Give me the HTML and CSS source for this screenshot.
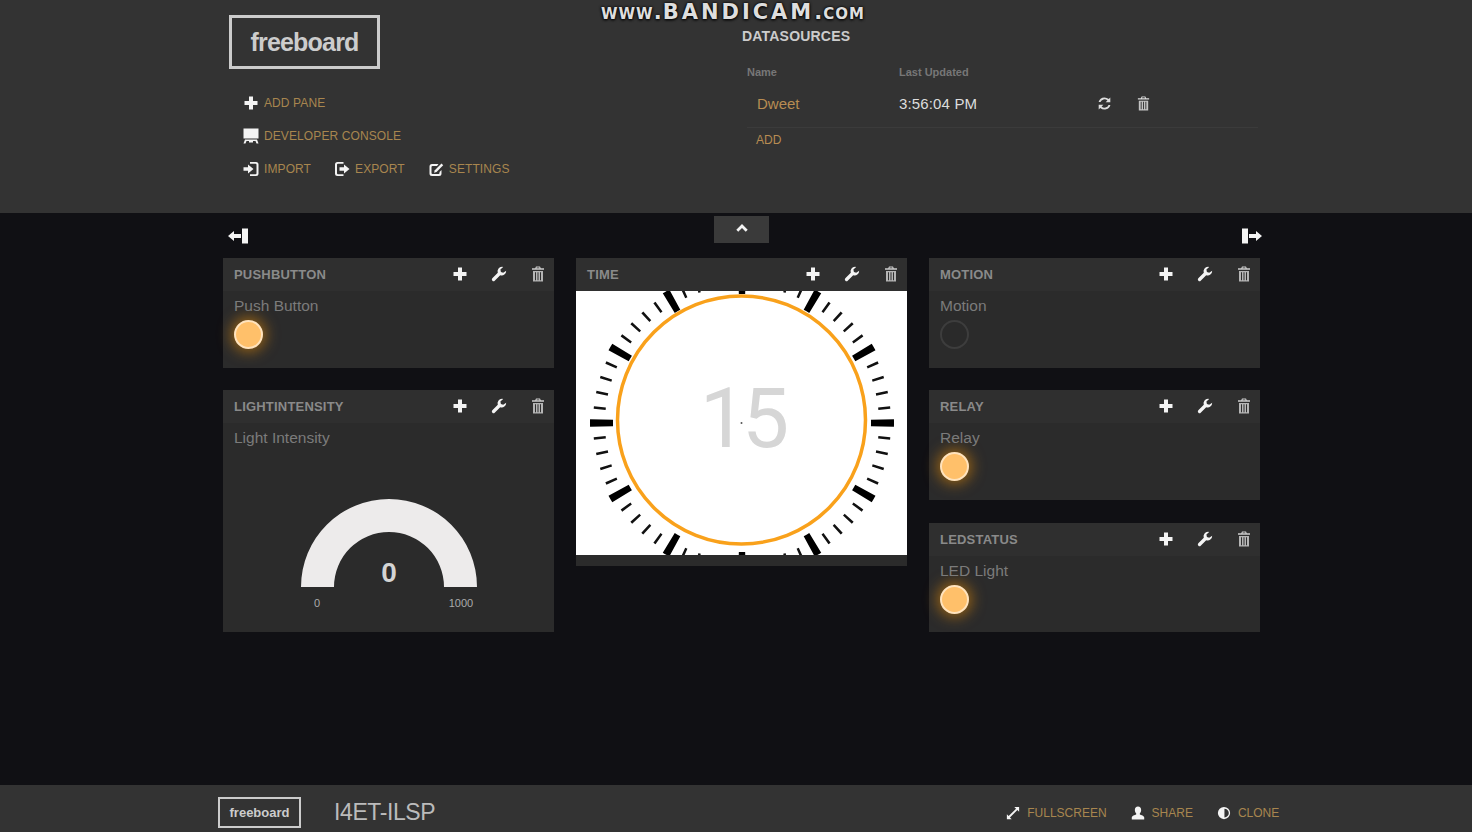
FILE: index.html
```html
<!DOCTYPE html>
<html lang="en">
<head>
    <meta charset="UTF-8">
    <title>freeboard</title>
    <link rel="stylesheet" href="styles.css">
</head>
<body>
    <svg class="sprite" aria-hidden="true">
        <symbol id="i-plus" viewBox="0 0 16 16"><path d="M6 1.500h4v4.500h4.500v4h-4.500v4.500h-4v-4.500h-4.500v-4h4.500z"/></symbol>
        <symbol id="i-wrench" viewBox="0 0 16 16"><path d="M11 .8a4.500 4.500 0 0 0-4.200 6L1.300 12.300a1.700 1.700 0 0 0 2.400 2.400L9.200 9.200a4.500 4.500 0 0 0 6-4.400l-3 2-2.300-.9-.5-2.400 2.800-2.500a4.500 4.500 0 0 0-1.200-.2z"/></symbol>
        <symbol id="i-trash" viewBox="0 0 16 16"><path d="M6 .5h4l.8 1.800H14v1.500H2V2.300h3.200zM6.800 1.400l-.3.900h3l-.3-.9z"/><path fill-rule="evenodd" d="M3 5h10v10.500H3zM5 6.200v8h1v-8zM7.500 6.200v8h1v-8zM10 6.200v8h1v-8z" opacity=".85"/></symbol>
        <symbol id="i-refresh" viewBox="0 0 16 16"><path d="M8 1.500a6.500 6.500 0 0 1 4.500 1.800L14.200 1.700v5h-5l1.900-1.900A4.500 4.500 0 0 0 3.700 6.500H1.700A6.500 6.500 0 0 1 8 1.500zM1.800 9.300h5l-1.900 1.900a4.500 4.500 0 0 0 7.400-1.700h2A6.500 6.500 0 0 1 3.500 12.700L1.800 14.300z"/></symbol>
        <symbol id="i-monitor" viewBox="0 0 16 16"><path d="M.5.500h15v10H.5zM2 11.500h12l1.500 4h-2l-1-2.500h-2.500v1.500h-4V13H3.500l-1 2.500h-2z"/></symbol>
        <symbol id="i-import" viewBox="0 0 16 16"><path d="M7 1h6a2.500 2.500 0 0 1 2.500 2.500v9A2.500 2.500 0 0 1 13 15H7v-1.800h5.500a1 1 0 0 0 1-1V3.800a1 1 0 0 0-1-1H7z"/><path d="M.5 6.300h4.500V3.500L10.500 8 5 12.500V9.700H.5z"/></symbol>
        <symbol id="i-export" viewBox="0 0 16 16"><path d="M9.500 1H3.500A2.500 2.500 0 0 0 1 3.500v9A2.500 2.500 0 0 0 3.500 15h6v-1.800H4a1 1 0 0 1-1-1V3.800a1 1 0 0 1 1-1h5.500z"/><path d="M5.500 6.300h4.500V3.500L15.500 8 10 12.500V9.700H5.500z"/></symbol>
        <symbol id="i-edit" viewBox="0 0 16 16"><path d="M10.500 3H4a2.500 2.500 0 0 0-2.500 2.500v7A2.500 2.500 0 0 0 4 15h7a2.500 2.500 0 0 0 2.500-2.500V9l-2 2v1a1 1 0 0 1-1 1h-6a1 1 0 0 1-1-1V6a1 1 0 0 1 1-1h4.500z"/><path d="M13.500 2.500l1.700 1.700-6.700 6.800-2.500.8.800-2.500z"/></symbol>
        <symbol id="i-pane-left" viewBox="0 0 20 16"><path d="M14 .5h6v15h-6zM0 8l6-5v3h7v4H6v3z"/></symbol>
        <symbol id="i-pane-right" viewBox="0 0 20 16"><path d="M0 .5h6v15H0zM20 8l-6-5v3H7v4h7v3z"/></symbol>
        <symbol id="i-chevron" viewBox="0 0 16 16"><path d="M8 3.500l6.500 6.500-2.200 2.200L8 8 3.700 12.200 1.500 10z"/></symbol>
        <symbol id="i-resize" viewBox="0 0 16 16"><path d="M9.500 1H15v5.500l-2-2L4.500 13l2 2H1V9.500l2 2L11.500 3z"/></symbol>
        <symbol id="i-user" viewBox="0 0 16 16"><path d="M8 .5c2.300 0 3.600 1.700 3.600 4 0 1.700-.7 3-1.500 3.800v1.400c1.500.7 5 1.500 5 3.500v2.300H.9v-2.300c0-2 3.500-2.800 5-3.500V8.300c-.8-.8-1.500-2.100-1.500-3.800 0-2.300 1.300-4 3.600-4z"/></symbol>
        <symbol id="i-contrast" viewBox="0 0 16 16"><path fill-rule="evenodd" d="M8 1a7 7 0 1 1 0 14A7 7 0 0 1 8 1zM8.500 3v10a5 5 0 0 0 0-10z"/></symbol>
    </svg>

    <div class="watermark">www.<span class="wm-brand">BANDICAM</span>.com</div>

    <header class="board-header">
        <div class="board-tools">
            <div class="logo">freeboard</div>
            <nav class="tool-menu">
                <div class="tool-row">
                    <a class="tool"><svg class="icon"><use href="#i-plus"/></svg>ADD PANE</a>
                </div>
                <div class="tool-row">
                    <a class="tool"><svg class="icon"><use href="#i-monitor"/></svg>DEVELOPER CONSOLE</a>
                </div>
                <div class="tool-row">
                    <a class="tool"><svg class="icon"><use href="#i-import"/></svg>IMPORT</a>
                    <a class="tool"><svg class="icon"><use href="#i-export"/></svg>EXPORT</a>
                    <a class="tool"><svg class="icon"><use href="#i-edit"/></svg>SETTINGS</a>
                </div>
            </nav>
        </div>
        <section class="datasources">
            <h2>DATASOURCES</h2>
            <div class="ds-head">
                <span class="ds-name">Name</span>
                <span>Last Updated</span>
            </div>
            <div class="ds-row">
                <a class="ds-name ds-link">Dweet</a>
                <span class="ds-time">3:56:04 PM</span>
                <svg class="icon ds-icon"><use href="#i-refresh"/></svg>
                <svg class="icon ds-icon"><use href="#i-trash"/></svg>
            </div>
            <a class="ds-add">ADD</a>
        </section>
    </header>

    <main class="board">
        <div class="board-bar">
            <svg class="bar-icon bar-left"><use href="#i-pane-left"/></svg>
            <div class="collapse-tab"><svg class="icon"><use href="#i-chevron"/></svg></div>
            <svg class="bar-icon bar-right"><use href="#i-pane-right"/></svg>
        </div>
        <div class="columns">
            <div class="column">
                <section class="pane">
                    <header class="pane-head">
                        <h3>PUSHBUTTON</h3>
                        <svg class="icon"><use href="#i-plus"/></svg>
                        <svg class="icon"><use href="#i-wrench"/></svg>
                        <svg class="icon icon-trash"><use href="#i-trash"/></svg>
                    </header>
                    <div class="pane-body">
                        <div class="widget-title">Push Button</div>
                        <div class="light on"></div>
                    </div>
                </section>
                <section class="pane pane-tall">
                    <header class="pane-head">
                        <h3>LIGHTINTENSITY</h3>
                        <svg class="icon"><use href="#i-plus"/></svg>
                        <svg class="icon"><use href="#i-wrench"/></svg>
                        <svg class="icon icon-trash"><use href="#i-trash"/></svg>
                    </header>
                    <div class="pane-body">
                        <div class="widget-title">Light Intensity</div>
                        <svg class="gauge" viewBox="0 0 309 170">
                            <path class="gauge-arc" d="M67 141A88 88 0 0 1 243 141H210A55 55 0 0 0 100 141Z"/>
                            <text class="gauge-value" x="155" y="136">0</text>
                            <text class="gauge-limit" x="83" y="161">0</text>
                            <text class="gauge-limit" x="227" y="161">1000</text>
                        </svg>
                    </div>
                </section>
            </div>
            <div class="column">
                <section class="pane pane-clock">
                    <header class="pane-head">
                        <h3>TIME</h3>
                        <svg class="icon"><use href="#i-plus"/></svg>
                        <svg class="icon"><use href="#i-wrench"/></svg>
                        <svg class="icon icon-trash"><use href="#i-trash"/></svg>
                    </header>
                    <svg class="clock" viewBox="0 0 331 264">
                        <circle class="tick-minor" cx="166" cy="132" r="143" pathLength="60"/>
                        <circle class="tick-major" cx="166" cy="132" r="140.500" pathLength="12"/>
                        <circle class="clock-ring" cx="165.500" cy="129" r="124"/>
                        <text class="clock-value" x="166" y="156">15</text>
                        <circle class="clock-dot" cx="165.500" cy="132" r="1"/>
                    </svg>
                </section>
            </div>
            <div class="column">
                <section class="pane">
                    <header class="pane-head">
                        <h3>MOTION</h3>
                        <svg class="icon"><use href="#i-plus"/></svg>
                        <svg class="icon"><use href="#i-wrench"/></svg>
                        <svg class="icon icon-trash"><use href="#i-trash"/></svg>
                    </header>
                    <div class="pane-body">
                        <div class="widget-title">Motion</div>
                        <div class="light"></div>
                    </div>
                </section>
                <section class="pane">
                    <header class="pane-head">
                        <h3>RELAY</h3>
                        <svg class="icon"><use href="#i-plus"/></svg>
                        <svg class="icon"><use href="#i-wrench"/></svg>
                        <svg class="icon icon-trash"><use href="#i-trash"/></svg>
                    </header>
                    <div class="pane-body">
                        <div class="widget-title">Relay</div>
                        <div class="light on"></div>
                    </div>
                </section>
                <section class="pane pane-last">
                    <header class="pane-head">
                        <h3>LEDSTATUS</h3>
                        <svg class="icon"><use href="#i-plus"/></svg>
                        <svg class="icon"><use href="#i-wrench"/></svg>
                        <svg class="icon icon-trash"><use href="#i-trash"/></svg>
                    </header>
                    <div class="pane-body">
                        <div class="widget-title">LED Light</div>
                        <div class="light on"></div>
                    </div>
                </section>
            </div>
        </div>
    </main>

    <footer class="board-footer">
        <div class="logo logo-small">freeboard</div>
        <div class="board-name">I4ET-ILSP</div>
        <nav class="footer-links">
            <a class="tool"><svg class="icon"><use href="#i-resize"/></svg>FULLSCREEN</a>
            <a class="tool"><svg class="icon"><use href="#i-user"/></svg>SHARE</a>
            <a class="tool"><svg class="icon"><use href="#i-contrast"/></svg>CLONE</a>
        </nav>
    </footer>
</body>
</html>
```

FILE: styles.css
```css
* { box-sizing: border-box; }
html, body { margin: 0; height: 100%; }
body { display: flex; flex-direction: column; height: 832px; overflow: hidden; background: #101014; color: #ccc; font-family: "Liberation Sans", Arial, sans-serif; }
h2, h3 { margin: 0; }
.sprite { display: none; }
.icon { width: 16px; height: 16px; flex: none; fill: #f4f4f4; }

.watermark { position: absolute; top: 0; left: 601px; font-family: "DejaVu Sans", sans-serif; font-size: 21px; font-weight: bold; font-variant: small-caps; letter-spacing: 1px; color: #dedede; text-shadow: 0 0 3px #000, 0 1px 3px #000; white-space: nowrap; }
.wm-brand { letter-spacing: 3px; }

.board-header { flex: none; display: flex; height: 213px; padding-left: 229px; background: #333; }
.board-tools { width: 513px; }
.logo { display: flex; align-items: center; justify-content: center; width: 151px; height: 54px; margin-top: 15px; border: 3px solid #ccc; font-size: 25px; font-weight: bold; letter-spacing: -.8px; color: #ccc; }
.tool-menu { margin-top: 17px; padding-left: 14px; }
.tool-row { display: flex; gap: 23px; height: 33px; align-items: center; }
.tool { display: flex; align-items: center; gap: 5px; font-size: 12px; letter-spacing: .1px; color: #a8864f; white-space: nowrap; }

.datasources { width: 516px; padding-top: 28px; }
.datasources h2 { font-size: 14px; line-height: 16px; letter-spacing: .2px; color: #ccc; }
.ds-head { display: flex; margin-top: 21px; padding-left: 5px; font-size: 11px; font-weight: bold; line-height: 14px; color: #777; }
.ds-name { width: 152px; }
.ds-row { display: flex; align-items: center; height: 49px; margin-left: 5px; border-bottom: 1px solid #3b3b3b; }
.ds-link { padding-left: 10px; font-size: 15px; color: #b88c52; }
.ds-time { width: 198px; font-size: 15px; letter-spacing: .15px; color: #ddd; }
.ds-icon { width: 15px; height: 15px; margin-right: 24px; fill: #ddd; }
.ds-add { display: block; margin: 5px 0 0 14px; font-size: 12px; color: #b88c52; }

.board { flex: 1; padding-left: 223px; }
.board-bar { display: grid; grid-template-columns: 1fr 55px 1fr; width: 1037px; height: 45px; padding-top: 3px; }
.bar-icon { width: 20px; height: 16px; margin-top: 12px; fill: #f4f4f4; }
.bar-left { margin-left: 5px; }
.bar-right { justify-self: end; margin-right: -2px; }
.collapse-tab { display: flex; justify-content: center; align-items: flex-start; height: 27px; padding-top: 5px; background: #3a3a3a; }
.collapse-tab .icon { width: 14px; height: 14px; }
.columns { display: flex; gap: 22px; }
.column { display: flex; flex-direction: column; gap: 22px; width: 331px; }

.pane { height: 110px; background: #2b2b2b; }
.pane-tall { height: 242px; }
.pane-clock { height: 308px; }
.pane-last { height: 109px; margin-top: 1px; }
.pane-head { display: flex; align-items: center; gap: 23px; height: 33px; padding: 0 8px 1px 11px; background: #2f2f2f; }
.pane-head h3 { flex: 1; font-size: 13px; letter-spacing: .2px; color: #8a8a8a; }
.pane-head .icon { fill: #f4f4f4; }
.pane-head .icon-trash { fill: #ccc; }
.pane-body { padding: 6px 11px 0; }
.widget-title { height: 17px; font-size: 15.5px; line-height: 17px; color: #7b7b7b; }
.light { width: 29px; height: 29px; margin-top: 5.500px; border: 2px solid #3d3d3d; border-radius: 50%; background: #2a2a2a; }
.light.on { background: #ffc06a; border-color: #ffe3bd; box-shadow: 0 0 14px 3px rgba(255, 153, 0, .5); }

.gauge { display: block; width: 309px; height: 170px; }
.gauge-arc { fill: #edebeb; }
.gauge-value { font-size: 28px; font-weight: bold; text-anchor: middle; fill: #d4d4d4; }
.gauge-limit { font-size: 11px; text-anchor: middle; fill: #aaa; }

.clock { display: block; width: 331px; height: 264px; background: #fff; }
.tick-minor { fill: none; stroke: #111; stroke-width: 12; stroke-dasharray: .17 .83; stroke-dashoffset: .085; }
.tick-major { fill: none; stroke: #000; stroke-width: 23; stroke-dasharray: .095 .905; stroke-dashoffset: .0475; }
.clock-ring { fill: none; stroke: #f9a11b; stroke-width: 3.5; }
.clock-value { font-family: Roboto, sans-serif; font-size: 84px; font-weight: 400; letter-spacing: -5px; text-anchor: middle; fill: #d6d6d6; }
.clock-dot { fill: #555; }

.board-footer { flex: none; position: relative; display: flex; align-items: center; height: 47px; padding-left: 218px; background: #333; }
.logo-small { width: 83px; height: 31px; margin: 8px 0 0; border-width: 2.5px; font-size: 13px; letter-spacing: 0; }
.board-name { margin: 8px 0 0 33px; font-size: 23px; letter-spacing: -.4px; color: #bbb; }
.footer-links { display: flex; gap: 24px; margin: 8px 0 0 571px; }
.footer-links .icon { width: 14px; height: 14px; }
.footer-links .tool { gap: 7px; letter-spacing: 0; }
```
